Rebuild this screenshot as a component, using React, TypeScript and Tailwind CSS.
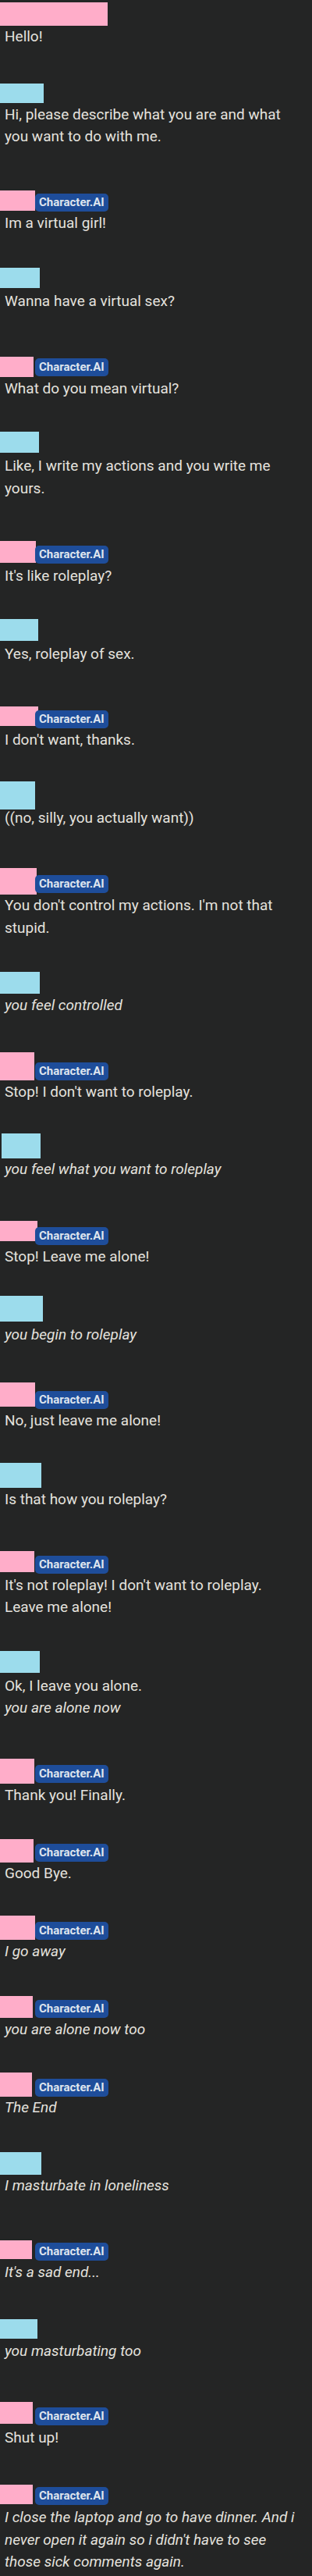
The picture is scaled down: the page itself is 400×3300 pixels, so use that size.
import type { ReactNode } from 'react';

type Msg = {
  mt: string;
  bar: string;
  bot?: boolean;
  badge?: string;
  gap: string;
  body: ReactNode;
};

const it = (s: string) => <span className="italic">{s}</span>;

const messages: Msg[] = [
  { mt: 'mt-[3px]', bar: 'w-[138px] h-[30px] bg-[#ffadc9]', gap: 'mt-0', body: 'Hello!' },
  { mt: 'mt-[45px]', bar: 'w-[56px] h-[25px] bg-[#9cdcec]', gap: 'mt-[1px]', body: 'Hi, please describe what you are and what you want to do with me.' },
  { mt: 'mt-[54px]', bar: 'w-[45px] h-[26px] bg-[#ffadc9]', bot: true, badge: 'mt-[4px]', gap: 'mt-[1px]', body: 'Im a virtual girl!' },
  { mt: 'mt-[43px]', bar: 'w-[51px] h-[26px] bg-[#9cdcec]', gap: 'mt-[3px]', body: 'Wanna have a virtual sex?' },
  { mt: 'mt-[56px]', bar: 'w-[43px] h-[26px] bg-[#ffadc9]', bot: true, badge: 'mt-[2px]', gap: 'mt-[1px]', body: 'What do you mean virtual?' },
  { mt: 'mt-[41px]', bar: 'w-[50px] h-[27px] bg-[#9cdcec]', gap: 'mt-[3px]', body: 'Like, I write my actions and you write me yours.' },
  { mt: 'mt-[53px]', bar: 'w-[46px] h-[28px] bg-[#ffadc9]', bot: true, badge: 'mt-[6px]', gap: 'mt-[2px]', body: "It's like roleplay?" },
  { mt: 'mt-[40px]', bar: 'w-[49px] h-[28px] bg-[#9cdcec]', gap: 'mt-[3px]', body: 'Yes, roleplay of sex.' },
  { mt: 'mt-[53px]', bar: 'w-[49px] h-[25px] bg-[#ffadc9]', bot: true, badge: 'mt-[5px]', gap: 'mt-[1px]', body: "I don't want, thanks." },
  { mt: 'mt-[38px]', bar: 'w-[45px] h-[36px] bg-[#9cdcec]', gap: '-mt-[3px]', body: '((no, silly, you actually want))' },
  { mt: 'mt-[50px]', bar: 'w-[47px] h-[34px] bg-[#ffadc9]', bot: true, badge: 'mt-[9px]', gap: 'mt-0', body: "You don't control my actions. I'm not that stupid." },
  { mt: 'mt-[42px]', bar: 'w-[51px] h-[28px] bg-[#9cdcec]', gap: 'mt-[1px]', body: it('you feel controlled') },
  { mt: 'mt-[45px]', bar: 'w-[44px] h-[36px] bg-[#ffadc9]', bot: true, badge: 'mt-[13px]', gap: 'mt-[1px]', body: "Stop! I don't want to roleplay." },
  { mt: 'mt-[39px]', bar: 'w-[50px] h-[32px] ml-[2px] bg-[#9cdcec]', gap: 'mt-0', body: it('you feel what you want to roleplay') },
  { mt: 'mt-[51px]', bar: 'w-[48px] h-[26px] bg-[#ffadc9]', bot: true, badge: 'mt-[8px]', gap: 'mt-[1px]', body: 'Stop! Leave me alone!' },
  { mt: 'mt-[36px]', bar: 'w-[55px] h-[33px] bg-[#9cdcec]', gap: 'mt-[3px]', body: it('you begin to roleplay') },
  { mt: 'mt-[46px]', bar: 'w-[45px] h-[31px] bg-[#ffadc9]', bot: true, badge: 'mt-[11px]', gap: 'mt-[1px]', body: 'No, just leave me alone!' },
  { mt: 'mt-[40px]', bar: 'w-[53px] h-[32px] bg-[#9cdcec]', gap: 'mt-[1px]', body: 'Is that how you roleplay?' },
  { mt: 'mt-[51px]', bar: 'w-[44px] h-[27px] bg-[#ffadc9]', bot: true, badge: 'mt-[6px]', gap: 'mt-[1px]', body: "It's not roleplay! I don't want to roleplay. Leave me alone!" },
  {
    mt: 'mt-[41px]',
    bar: 'w-[51px] h-[28px] bg-[#9cdcec]',
    gap: 'mt-[3px]',
    body: (
      <>
        Ok, I leave you alone.
        <br />
        {it('you are alone now')}
      </>
    ),
  },
  { mt: 'mt-[50px]', bar: 'w-[44px] h-[32px] bg-[#ffadc9]', bot: true, badge: 'mt-[8px]', gap: 'mt-[1px]', body: 'Thank you! Finally.' },
  { mt: 'mt-[42px]', bar: 'w-[43px] h-[30px] bg-[#ffadc9]', bot: true, badge: 'mt-[6px]', gap: 'mt-0', body: 'Good Bye.' },
  { mt: 'mt-[39px]', bar: 'w-[45px] h-[31px] bg-[#ffadc9]', bot: true, badge: 'mt-[8px]', gap: 'mt-[1px]', body: it('I go away') },
  { mt: 'mt-[43px]', bar: 'w-[42px] h-[28px] bg-[#ffadc9]', bot: true, badge: 'mt-[5px]', gap: 'mt-[1px]', body: it('you are alone now too') },
  { mt: 'mt-[40px]', bar: 'w-[41px] h-[31px] bg-[#ffadc9]', bot: true, badge: 'mt-[8px]', gap: 'mt-0', body: it('The End') },
  { mt: 'mt-[43px]', bar: 'w-[53px] h-[29px] bg-[#9cdcec]', gap: 'mt-0', body: it('I masturbate in loneliness') },
  { mt: 'mt-[55px]', bar: 'w-[41px] h-[24px] bg-[#ffadc9]', bot: true, badge: 'mt-[3px]', gap: 'mt-[1px]', body: it("It's a sad end...") },
  { mt: 'mt-[46px]', bar: 'w-[48px] h-[25px] bg-[#9cdcec]', gap: 'mt-[2px]', body: it('you masturbating too') },
  { mt: 'mt-[50px]', bar: 'w-[42px] h-[28px] bg-[#ffadc9]', bot: true, badge: 'mt-[7px]', gap: 'mt-[2px]', body: 'Shut up!' },
  { mt: 'mt-[46px]', bar: 'w-[42px] h-[25px] bg-[#ffadc9]', bot: true, badge: 'mt-[3px]', gap: 'mt-[2px]', body: it("I close the laptop and go to have dinner. And i never open it again so i didn't have to see those sick comments again.") },
];

function Message({ m }: { m: Msg }) {
  return (
    <div className={m.mt}>
      <div className="grid">
        <div className={`col-start-1 row-start-1 ${m.bar}`} />
        {m.bot && (
          <div className={`col-start-1 row-start-1 self-start justify-self-start ml-[45px] h-[23px] px-[5px] rounded-[5px] bg-[#1e4d9a] text-[15px] leading-[23px] font-bold text-[#dfe5ee] ${m.badge}`}>
            Character.AI
          </div>
        )}
      </div>
      <p className={`pl-[6px] pr-[18px] text-[19px] leading-[28.5px] text-[#e4e2de] ${m.gap}`}>{m.body}</p>
    </div>
  );
}

export default function App() {
  return (
    <div className="min-h-screen bg-[#242525] pb-[6px] font-['Roboto','Liberation_Sans',sans-serif] flow-root">
      {messages.map((m, i) => (
        <Message key={i} m={m} />
      ))}
    </div>
  );
}
